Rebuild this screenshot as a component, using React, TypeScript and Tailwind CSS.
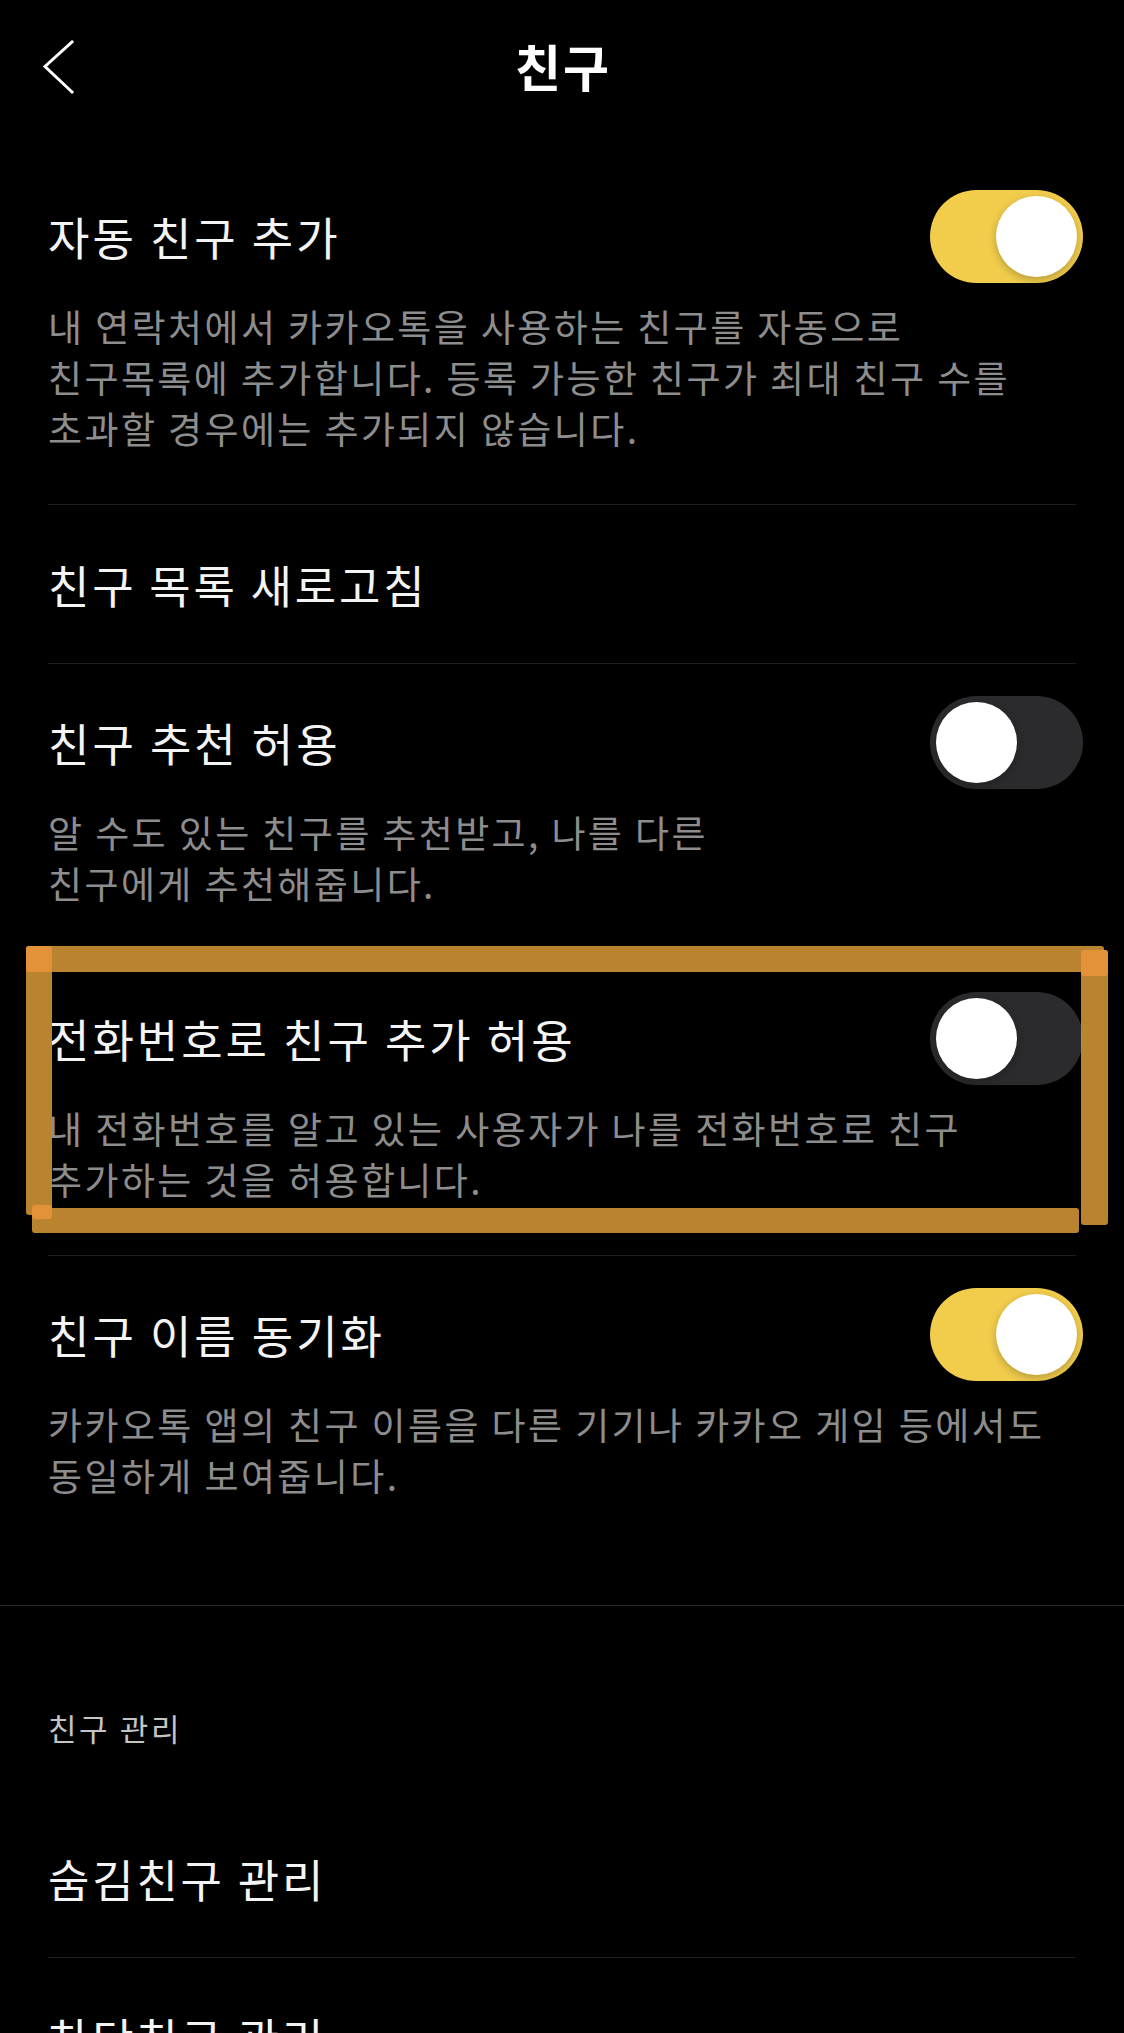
const font = {
  fontFamily: '"Noto Sans CJK KR", "Noto Sans", sans-serif',
};

type ToggleProps = { on: boolean };

const Toggle = ({ on }: ToggleProps) => (
  <div
    className={`-mr-[7px] flex h-[93px] w-[153px] shrink-0 items-center rounded-full p-[6px] ${
      on ? "justify-end bg-[#f2cd4c]" : "justify-start bg-[#2b2b2d]"
    }`}
  >
    <div className="h-[81px] w-[81px] rounded-full bg-white shadow-[0_3px_8px_rgba(0,0,0,0.25)]" />
  </div>
);

type ToggleItemProps = {
  title: string;
  lines: string[];
  on: boolean;
  divider?: boolean;
};

const ToggleItem = ({ title, lines, on, divider = true }: ToggleItemProps) => (
  <div className="px-[48px]">
    <div className="pt-[32px] pb-[50px]">
      <div className="flex h-[93px] items-center justify-between">
        <span className="text-[45px] leading-none tracking-[3px] text-[#f4f4f4]">{title}</span>
        <Toggle on={on} />
      </div>
      <p className="mt-[18px] text-[37px] leading-[51px] tracking-[2.4px] text-[#8d8d8d]">
        {lines.map((line) => (
          <span key={line} className="block whitespace-nowrap">
            {line}
          </span>
        ))}
      </p>
    </div>
    {divider && <div className="h-px bg-[#1e1e1e]" />}
  </div>
);

const LinkItem = ({ title, divider = true }: { title: string; divider?: boolean }) => (
  <div className="px-[48px]">
    <div className="flex h-[158px] items-center">
      <span className="text-[45px] leading-none tracking-[2.8px] text-[#f4f4f4]">{title}</span>
    </div>
    {divider && <div className="h-px bg-[#1e1e1e]" />}
  </div>
);

export default function App() {
  return (
    <div className="relative min-h-screen overflow-hidden bg-black text-white" style={font}>
      {/* header */}
      <header className="grid h-[130px] grid-cols-[1fr_auto_1fr] items-center">
        <div className="pl-[42px] pt-[4px]">
          <svg width="34" height="55" viewBox="0 0 34 55" fill="none">
            <path d="M30 2 L3 26.5 L30 52" stroke="white" strokeWidth="3" strokeLinecap="square" />
          </svg>
        </div>
        <h1 className="pl-[2px] text-[50px] font-semibold leading-none tracking-[2px] text-white">친구</h1>
        <div />
      </header>

      <div className="pt-[28px]">
        <ToggleItem
          title="자동 친구 추가"
          on
          lines={[
            "내 연락처에서 카카오톡을 사용하는 친구를 자동으로",
            "친구목록에 추가합니다. 등록 가능한 친구가 최대 친구 수를",
            "초과할 경우에는 추가되지 않습니다.",
          ]}
        />
        <LinkItem title="친구 목록 새로고침" />
        <ToggleItem
          title="친구 추천 허용"
          on={false}
          lines={["알 수도 있는 친구를 추천받고, 나를 다른", "친구에게 추천해줍니다."]}
        />
        <ToggleItem
          title="전화번호로 친구 추가 허용"
          on={false}
          lines={["내 전화번호를 알고 있는 사용자가 나를 전화번호로 친구", "추가하는 것을 허용합니다."]}
        />
        <ToggleItem
          title="친구 이름 동기화"
          on
          divider={false}
          lines={["카카오톡 앱의 친구 이름을 다른 기기나 카카오 게임 등에서도", "동일하게 보여줍니다."]}
        />
      </div>

      <div className="mt-[54px] h-px bg-[#262626]" />

      <div className="px-[48px] pt-[102px] pb-[51px]">
        <p className="text-[31px] leading-[40px] tracking-[2.6px] text-[#c4c4c4]">친구 관리</p>
      </div>
      <LinkItem title="숨김친구 관리" />
      <LinkItem title="차단친구 관리" divider={false} />

      {/* hand-drawn highlight annotation */}
      <div className="pointer-events-none absolute left-[26px] top-[946px] h-[287px] w-[1082px]">
        <div className="absolute left-0 top-0 h-[26px] w-[1078px] rounded-[3px] bg-[#c48a33]/95" />
        <div className="absolute left-0 top-[1px] h-[268px] w-[26px] rounded-[3px] bg-[#c48a33]/95" />
        <div className="absolute bottom-0 left-[6px] h-[25px] w-[1047px] rounded-[3px] bg-[#c48a33]/95" />
        <div className="absolute right-0 top-[4px] h-[275px] w-[27px] rounded-[3px] bg-[#c48a33]/95" />
        <div className="absolute left-0 top-0 h-[26px] w-[26px] rounded-[3px] bg-[#e3923a]" />
        <div className="absolute right-0 top-[4px] h-[26px] w-[27px] rounded-[3px] bg-[#e3923a]" />
        <div className="absolute left-[6px] bottom-[14px] h-[14px] w-[20px] rounded-[3px] bg-[#e3923a]" />
      </div>
    </div>
  );
}
